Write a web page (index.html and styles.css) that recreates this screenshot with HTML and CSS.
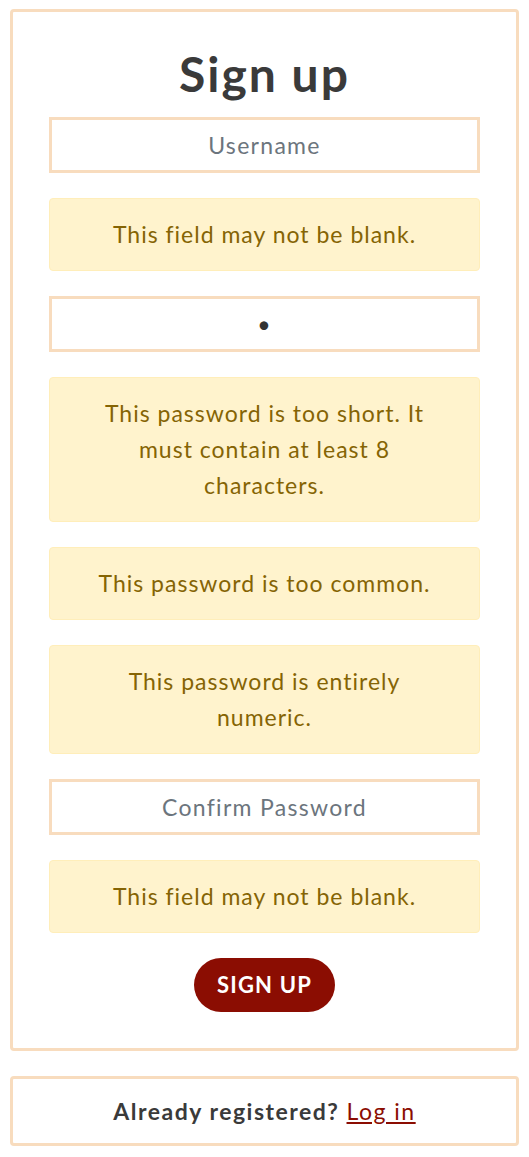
FILE: index.html
```html
<!DOCTYPE html>
<html lang="en">
<head>
<meta charset="utf-8">
<title>Sign up</title>
<link rel="stylesheet" href="styles.css">
</head>
<body>
<main class="page">
  <section class="card signup">
    <h1 class="title">Sign up</h1>
    <form class="form">
      <input class="field" type="text" placeholder="Username">
      <div class="alert">This field may not be blank.</div>
      <input class="field" type="password" value="1">
      <div class="alert">This password is too short. It must contain at least 8 characters.</div>
      <div class="alert">This password is too common.</div>
      <div class="alert">This password is entirely numeric.</div>
      <input class="field" type="password" placeholder="Confirm Password">
      <div class="alert">This field may not be blank.</div>
      <button class="btn" type="button">SIGN UP</button>
    </form>
  </section>
  <section class="card login">
    <p class="login-text">Already registered? <a class="link" href="#">Log in</a></p>
  </section>
</main>
</body>
</html>
```
FILE: styles.css
```css
* { box-sizing: border-box; }
html, body { margin: 0; padding: 0; background: #fff; }
body {
  font-family: "Lato", "Noto Sans", sans-serif;
  color: #3a3a3a;
}
.page {
  padding: 9px 10px 0 10px;
  width: 529px;
  display: flex;
  flex-direction: column;
  gap: 25px;
}
.card {
  width: 509px;
  border: 3px solid #f8dcbe;
  border-radius: 4px;
  background: #fff;
}
.signup {
  padding: 33px 36px 36px 36px;
}
.title {
  margin: 0 0 14px 0;
  text-align: center;
  font-size: 48px;
  line-height: 1.2;
  font-weight: 700;
  letter-spacing: 2px;
  color: #3a3a3a;
}
.form {
  display: flex;
  flex-direction: column;
  gap: 25px;
}
.field {
  display: block;
  width: 100%;
  height: 56px;
  border: 3px solid #f8dcbe;
  border-radius: 0;
  background: #fff;
  font-family: "Lato", "Noto Sans", sans-serif;
  font-size: 23px;
  letter-spacing: 1.3px;
  text-align: center;
  color: #333;
  outline: none;
  padding: 0 12px;
}
.field::placeholder { color: #6c757d; opacity: 1; }
.alert {
  background: #fff3cd;
  border: 1px solid #ffeeba;
  border-radius: 4px;
  color: #856404;
  font-size: 23px;
  letter-spacing: 1px;
  line-height: 36px;
  text-align: center;
  padding: 17.5px 40px;
}
.btn {
  align-self: center;
  width: 141px;
  height: 54px;
  border: none;
  border-radius: 27px;
  background: #8b0d02;
  color: #fff;
  font-family: "Lato", "Noto Sans", sans-serif;
  font-weight: 700;
  font-size: 22px;
  letter-spacing: 1.2px;
  padding: 0;
}
.login {
  padding: 14px 20px;
}
.login-text {
  margin: 0;
  text-align: center;
  font-size: 23px;
  letter-spacing: 1.5px;
  line-height: 36px;
  font-weight: 700;
  color: #3a3a3a;
}
.link {
  font-weight: 400;
  color: #8b0d02;
  text-decoration: underline;
}
```
